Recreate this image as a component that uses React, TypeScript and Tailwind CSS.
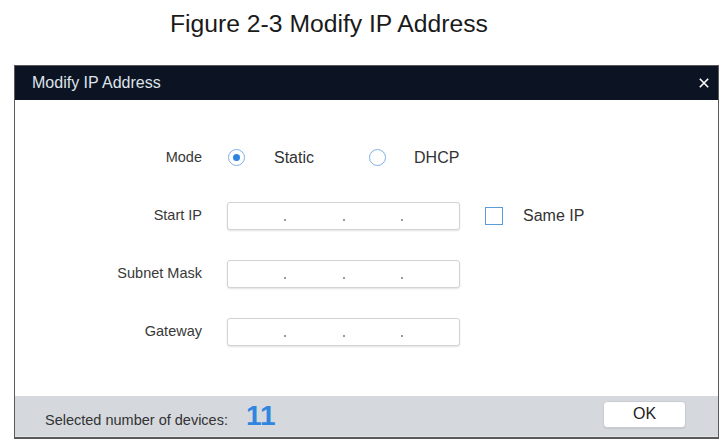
import React from 'react';

const font = { fontFamily: '"Liberation Sans", Arial, sans-serif' };

const IpInput: React.FC = () => (
  <div className="flex h-[28px] w-[233px] items-end rounded-[3px] border border-[#d3d3d3] bg-white pb-[8px] shadow-[0_1px_2px_rgba(0,0,0,0.12)]">
    <div className="flex-1" />
    <span className="h-[2px] w-[2px] bg-[#9a9a9a]" />
    <div className="flex-1" />
    <span className="h-[2px] w-[2px] bg-[#9a9a9a]" />
    <div className="flex-1" />
    <span className="h-[2px] w-[2px] bg-[#9a9a9a]" />
    <div className="flex-1" />
  </div>
);

const Radio: React.FC<{ checked?: boolean }> = ({ checked }) => (
  <span className="flex h-[17px] w-[17px] items-center justify-center rounded-full border-[1.5px] border-[#7fb0e3] bg-white">
    {checked && <span className="h-[7px] w-[7px] rounded-full bg-[#2f84e2]" />}
  </span>
);

const Row: React.FC<{ label: string; children: React.ReactNode }> = ({ label, children }) => (
  <div className="flex h-[58px] items-center">
    <div className="w-[187px] text-right text-[14.5px] text-[#383838]">{label}</div>
    <div className="ml-[25px] flex items-center">{children}</div>
  </div>
);

export default function App() {
  return (
    <div className="h-[448px] w-[726px] bg-white" style={font}>
      {/* Caption */}
      <div className="pl-[170px] pt-[12px] text-[24.7px] leading-none text-[#1a1a1a]">
        Figure 2-3 Modify IP Address
      </div>

      {/* Dialog */}
      <div className="ml-[14px] mt-[28px] flex w-[705px] flex-col border border-b-2 border-[#5a5a5a]">
        {/* Title bar */}
        <div className="flex h-[34px] items-center justify-between bg-[#0c1424] pl-[17px] pr-[9px]">
          <span className="text-[16px] text-[#dfe3ea]">Modify IP Address</span>
          <svg width="10" height="10" viewBox="0 0 10 10" className="text-white">
            <path d="M0.8 0.8 L9.2 9.2 M9.2 0.8 L0.8 9.2" stroke="currentColor" strokeWidth="1.6" />
          </svg>
        </div>

        {/* Body */}
        <div className="h-[296px] bg-white pt-[29px]">
          <Row label="Mode">
            <span className="ml-[1px]">
              <Radio checked />
            </span>
            <span className="ml-[29px] text-[16px] text-[#333]">Static</span>
            <span className="ml-[55px]">
              <Radio />
            </span>
            <span className="ml-[28px] text-[16px] text-[#333]">DHCP</span>
          </Row>
          <Row label="Start IP">
            <IpInput />
            <span className="ml-[25px] h-[18px] w-[18px] border-[1.5px] border-[#5d9bd8] bg-white" />
            <span className="ml-[20px] text-[16px] text-[#333]">Same IP</span>
          </Row>
          <Row label="Subnet Mask">
            <IpInput />
          </Row>
          <Row label="Gateway">
            <IpInput />
          </Row>
        </div>

        {/* Footer */}
        <div className="flex h-[41px] items-start justify-between border-b border-[#e4e6e9] bg-[#d5d8dd] pl-[30px] pr-[32px]">
          <div className="flex items-baseline pt-[5px]">
            <span className="text-[14.5px] text-[#333]">Selected number of devices:</span>
            <span className="ml-[18px] text-[28px] font-bold leading-[30px] text-[#2f86e0]">11</span>
          </div>
          <button className="mt-[5px] h-[27px] w-[83px] rounded-[4px] border border-[#c9ccd1] bg-white text-[16px] text-[#222] shadow-[0_1px_1px_rgba(0,0,0,0.08)]">
            OK
          </button>
        </div>
      </div>
    </div>
  );
}
